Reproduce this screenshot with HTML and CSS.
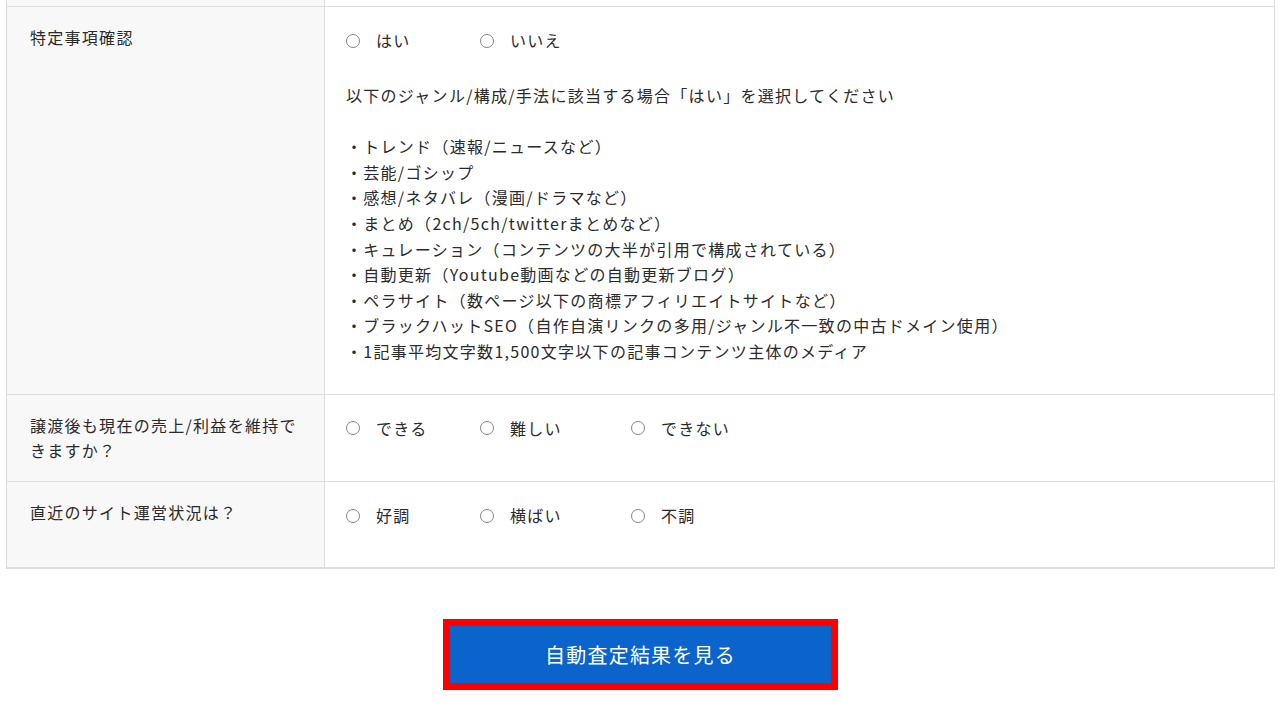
FILE: index.html
```html
<!DOCTYPE html>
<html lang="ja">
<head>
    <meta charset="UTF-8">
    <meta name="viewport" content="width=device-width, initial-scale=1.0">
    <title>自動査定フォーム</title>
    <link rel="stylesheet" href="styles.css">
</head>
<body>

    <div class="wrap">
        <div class="form-table">
            <div class="row row-prev">
                <div class="label"></div>
                <div class="value"></div>
            </div>

            <div class="row">
                <div class="label">特定事項確認</div>
                <div class="value">
                    <div class="choices">
                        <label class="choice"><span class="radio"></span>はい</label>
                        <label class="choice"><span class="radio"></span>いいえ</label>
                    </div>
                    <p class="note">
                        以下のジャンル/構成/手法に該当する場合「はい」を選択してください<br>
                        <br>
                        ・トレンド（速報/ニュースなど）<br>
                        ・芸能/ゴシップ<br>
                        ・感想/ネタバレ（漫画/ドラマなど）<br>
                        ・まとめ（2ch/5ch/twitterまとめなど）<br>
                        ・キュレーション（コンテンツの大半が引用で構成されている）<br>
                        ・自動更新（Youtube動画などの自動更新ブログ）<br>
                        ・ペラサイト（数ページ以下の商標アフィリエイトサイトなど）<br>
                        ・ブラックハットSEO（自作自演リンクの多用/ジャンル不一致の中古ドメイン使用）<br>
                        ・1記事平均文字数1,500文字以下の記事コンテンツ主体のメディア
                    </p>
                </div>
            </div>

            <div class="row">
                <div class="label">譲渡後も現在の売上/利益を維持できますか？</div>
                <div class="value">
                    <div class="choices">
                        <label class="choice"><span class="radio"></span>できる</label>
                        <label class="choice"><span class="radio"></span>難しい</label>
                        <label class="choice"><span class="radio"></span>できない</label>
                    </div>
                </div>
            </div>

            <div class="row">
                <div class="label">直近のサイト運営状況は？</div>
                <div class="value">
                    <div class="choices">
                        <label class="choice"><span class="radio"></span>好調</label>
                        <label class="choice"><span class="radio"></span>横ばい</label>
                        <label class="choice"><span class="radio"></span>不調</label>
                    </div>
                </div>
            </div>
        </div>

        <div class="submit-area">
            <button class="submit">自動査定結果を見る</button>
        </div>
    </div>

</body>
</html>
```

FILE: styles.css
```css
body {
    margin: 0;
    font-family: "Noto Sans CJK JP", "Noto Sans", sans-serif;
    font-size: 16px;
    line-height: 1.6;
    letter-spacing: 0.08em;
    color: #2b2b2b;
    background: #fff;
}
.wrap {
    padding: 0 5px 0 6px;
}
.form-table {
    border: 1px solid #ddd;
    border-top: none;
}
.row {
    display: grid;
    grid-template-columns: 318px 1fr;
    border-bottom: 1px solid #ddd;
}
.row-prev {
    height: 6px;
}
.row-prev .label,
.row-prev .value {
    padding: 0;
}
.label {
    background: #f8f8f8;
    border-right: 1px solid #ddd;
    padding: 18px 18px 17px 23px;
}
.value {
    padding: 18px 21px 17px;
}
.choices {
    display: grid;
    grid-template-columns: 134px 151px auto;
    align-items: start;
    padding-top: 3px;
    min-height: 47px;
}
.choice {
    display: flex;
    align-items: center;
}
.radio {
    width: 12px;
    height: 12px;
    border: 1px solid #888;
    border-radius: 50%;
    margin-right: 16px;
}
.note {
    margin: 8px 0 12px;
}
.submit-area {
    display: flex;
    justify-content: center;
    padding: 50px 0 17px;
}
.submit {
    width: 395px;
    height: 71px;
    border: 7px solid #ff0000;
    background: #0a64cc;
    color: #fff;
    font-family: inherit;
    font-size: 20px;
    letter-spacing: 0.06em;
}
```
